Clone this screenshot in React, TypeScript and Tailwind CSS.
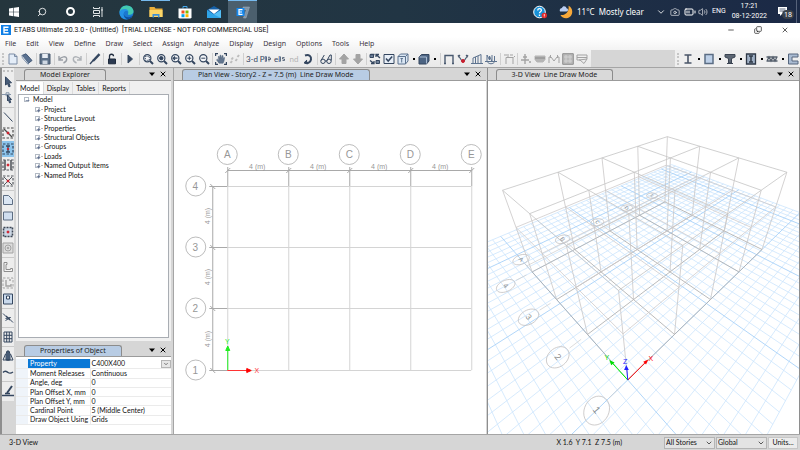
import type { ReactNode } from 'react';
import clsx from 'clsx';
import {
	BatteryMedium,
	Camera,
	ChevronDown,
	Copy,
	Minus,
	Plus,
	Search,
	Volume2,
	X,
} from 'lucide-react';

const NAVY = '#34465f';
const GRAY = '#a3a3a3';

type IconProps = { children: ReactNode; color?: string; size?: string };

function Icon({ children, color = NAVY, size = 'size-3' }: IconProps) {
	return (
		<svg
			viewBox="0 0 12 12"
			className={clsx('shrink-0', size)}
			fill="none"
			stroke={color}
			strokeWidth="1"
			aria-hidden="true"
		>
			{children}
		</svg>
	);
}

function Magnifier({ children }: { children?: ReactNode }) {
	return (
		<Icon>
			<circle cx="5.3" cy="5.2" r="3.6" fill="#f4f6f9" strokeWidth="1.2" />
			<path d="M8 8l3 3" strokeWidth="2" />
			{children}
		</Icon>
	);
}

type Tool = { name: string; icon: ReactNode };
// '|' and '||' are narrow and wide separators, 'v' is a drop-down arrow
type Entry = Tool | '|' | '||' | 'v';

const mainTools: Entry[] = [
	{
		name: 'New model',
		icon: (
			<Icon>
				<path d="M2 1h5.5L10 3.5V11H2z" fill="#e4edf8" stroke="#7c8da6" />
				<path d="M7.5 1v2.500H10" stroke="#7c8da6" />
			</Icon>
		),
	},
	{
		name: 'Open',
		icon: (
			<Icon>
				<path d="M1 2.500L5 .8l6 6.700-4 3z" fill="#5b7291" stroke="#455a78" />
				<path d="M1 2.500l.4 2.300L7 11.300V10.200" fill="#fff" stroke="#8295ae" />
			</Icon>
		),
	},
	'||',
	{
		name: 'Save',
		icon: (
			<Icon>
				<path d="M1 1h10v10H1z" fill="#5d7189" stroke="#44566d" />
				<path d="M3.200 1h5.600v4H3.200z" fill="#e9eef5" stroke="none" />
				<path d="M3.500 7.500h5V11h-5z" fill="#cfd8e3" stroke="none" />
			</Icon>
		),
	},
	'||',
	{
		name: 'Undo',
		icon: (
			<Icon color="#9a9fa6">
				<path d="M2 3v4h4M2.300 6.600C4 3.500 9.500 2.500 9.700 6c.1 2-1.700 3.300-3.200 4" strokeWidth="1.400" />
			</Icon>
		),
	},
	{
		name: 'Redo',
		icon: (
			<Icon color="#aeb2b7">
				<path d="M10 3v4H6M9.700 6.600C8 3.500 2.500 2.500 2.300 6c-.1 2 1.700 3.300 3.200 4" strokeWidth="1.400" />
			</Icon>
		),
	},
	'||',
	{
		name: 'Edit',
		icon: (
			<Icon>
				<path d="M10.500 1.200L4 8" strokeWidth="2.400" />
				<path d="M4.500 7L1 11" strokeWidth="1.300" />
			</Icon>
		),
	},
	'|',
	{
		name: 'Lock model',
		icon: (
			<Icon color="#1f2b3d">
				<path d="M3.500 6V3.200c0-2.600 4-2.600 4 0" strokeWidth="1.300" />
				<path d="M2.500 6h7v4.800h-7z" fill="#2b3950" />
			</Icon>
		),
	},
	'||',
	{
		name: 'Run analysis',
		icon: (
			<Icon>
				<path d="M4 2l4.500 4L4 10z" fill={NAVY} />
			</Icon>
		),
	},
	'||',
	{
		name: 'Rubber band zoom',
		icon: (
			<Magnifier>
				<path d="M3.300 3.300h4v4h-4z" strokeDasharray="1.200 1" />
			</Magnifier>
		),
	},
	{
		name: 'Restore full view',
		icon: (
			<Magnifier>
				<circle cx="5.300" cy="5.200" r="1.700" fill={NAVY} />
			</Magnifier>
		),
	},
	{
		name: 'Previous zoom',
		icon: (
			<Magnifier>
				<path d="M3 5.200h4.500M5 3.500L3.200 5.200 5 7" strokeWidth="1.200" />
			</Magnifier>
		),
	},
	{
		name: 'Zoom in',
		icon: (
			<Magnifier>
				<path d="M3.300 5.200h4M5.300 3.200v4" />
			</Magnifier>
		),
	},
	{
		name: 'Zoom out',
		icon: (
			<Magnifier>
				<path d="M3.300 5.200h4" />
			</Magnifier>
		),
	},
	'|',
	{
		name: 'Pan',
		icon: (
			<Icon>
				<path d="M.6 3V.6H3M9 .6h2.400V3M.6 9v2.400H3M9 11.400h2.400V9" strokeWidth="1.200" />
				<path
					d="M4 10.200L1.500 6.800l1-.6 1.300 1L3.300 3.500l.9-.2.9 2.500-.1-3.600h1l.4 3.500.8-3.200.9.200-.4 3.600 1.200-2 .7.4L9 8.200l-1 2z"
					fill="#62758e"
					stroke="#4f627b"
					strokeWidth=".5"
				/>
			</Icon>
		),
	},
	{
		name: 'Walk through',
		icon: (
			<Icon color="#bdbdbd">
				<path d="M1.500 10l1.500-2M2.500 6.500l1.500-2M6.500 8l1.500-2M8.500 4l1.500-2" strokeWidth="2" />
			</Icon>
		),
	},
	'|',
	{ name: '3-d view', icon: <span className="text-[8px] text-[#34465f]">3-d</span> },
	{
		name: 'Plan view',
		icon: (
			<span className="flex items-center text-[8px] text-[#34465f]">
				Pl
				<Icon size="w-1.5 h-3">
					<path d="M1 1v10M4 4h5v3H4M6 1v3M6 7v4" strokeWidth="1.500" />
				</Icon>
			</span>
		),
	},
	{
		name: 'Elevation view',
		icon: (
			<span className="flex items-center text-[8px] text-[#34465f]">
				el
				<Icon size="w-1.5 h-3">
					<path d="M1 1v10M9 3H5v3h4v3H5" strokeWidth="1.500" />
				</Icon>
			</span>
		),
	},
	{ name: 'Named display', icon: <span className="text-[8px] text-[#b3b3b3]">nd</span> },
	{
		name: 'Rotate 3D view',
		icon: (
			<Icon>
				<path d="M3 2.500c4-1.500 6.500 1 6 4S5.500 10.800 3 9.500" strokeWidth="2" />
				<path d="M5 7L2 9.800l3.500 1.200" fill={NAVY} />
			</Icon>
		),
	},
	'||',
	{
		name: 'Object shrink',
		icon: (
			<Icon>
				<circle cx="3" cy="8.300" r="2.200" />
				<circle cx="9" cy="8.300" r="2.200" />
				<path d="M1 7.500L4.300 2M7 7.500L10 2h1.300v5.500M5 8h2" />
			</Icon>
		),
	},
	'||',
	{
		name: 'Move up in list',
		icon: (
			<Icon color={GRAY}>
				<path d="M6 1l4.500 5H8v4.500H4V6H1.500z" fill={GRAY} />
			</Icon>
		),
	},
	{
		name: 'Move down in list',
		icon: (
			<Icon color={GRAY}>
				<path d="M6 11L1.500 6H4V1.500h4V6h2.500z" fill={GRAY} />
			</Icon>
		),
	},
	'|',
	{
		name: 'Object view options',
		icon: (
			<Icon>
				<path d="M1 1.500h3.500v3H1zM7 7.500h3.500v3H7z" fill="#71839b" />
				<path d="M1.500 1.500h4M11 5L7 1.500M7 4V1.500h3M1 7.500l4 3M5 8v2.500H2" strokeWidth="1.300" />
			</Icon>
		),
	},
	{
		name: 'Display options',
		icon: (
			<Icon>
				<path d="M1 1.500h10v9H1z" fill="#e8eff8" />
				<path d="M3 5.500l2.200 2.500L9.200 3.500" strokeWidth="1.500" />
			</Icon>
		),
	},
	{
		name: 'Assign to selection',
		icon: (
			<Icon color="#5d738f">
				<path d="M1 3.500h7.500V11H1zM1 3.500L3.500 1H11v7l-2.500 3M8.500 3.500L11 1" fill="#dbe7f4" />
				<path d="M4.700 5v4.500M3.500 5.500h2.400" />
			</Icon>
		),
	},
	'v',
	{
		name: 'Render objects',
		icon: (
			<Icon>
				<path d="M1 4l2.500-2.500H11V8l-2.500 3H1z" fill="#4c6483" />
				<path d="M1.500 4h7v6.500" stroke="#a9bbd2" />
			</Icon>
		),
	},
	'v',
	'||',
	{
		name: 'Undeformed shape',
		icon: (
			<Icon color="#4a5a70">
				<path d="M1 10.500h2M9 10.500h2M2 10.500V2.500h8v8" strokeWidth="1.400" />
			</Icon>
		),
	},
	{
		name: 'Deformed shape',
		icon: (
			<Icon color="#4a5a70">
				<path d="M1 2l4 6M11 2L7 8M1 4l2-2M11 4L9 2" strokeWidth="1.200" />
				<circle cx="6" cy="8" r="1.500" fill="#c8202f" stroke="#c8202f" />
			</Icon>
		),
	},
	{
		name: 'Force diagrams',
		icon: (
			<Icon color="#5d738f">
				<path d="M0 10.500h12M2 10.500V5l8-3.500v9M4.500 10V4M7 10V3" />
			</Icon>
		),
	},
	{
		name: 'Energy diagrams',
		icon: (
			<Icon color="#5d738f">
				<path d="M0 8.500h12M2 8V2l2.500 5V3L7 8.500V2M9.500 8V3M2 8.500c2 3 6 3 8 0" />
			</Icon>
		),
	},
	'||',
	{
		name: 'Steel frame design',
		icon: (
			<Icon color={GRAY}>
				<path d="M3 11V4.500h7V11M1 2h3M5 1v3M7 2h3M10.500 4.500L12 3" />
			</Icon>
		),
	},
	'|',
	{
		name: 'Composite design',
		icon: (
			<Icon color={GRAY}>
				<path d="M1 7h8M5 1v10M3 4h4M9 9h2" strokeWidth="1.400" />
			</Icon>
		),
	},
	{
		name: 'Slab design',
		icon: (
			<Icon color={GRAY}>
				<path d="M1 3h10v3.500L9 9H3L1 6.500z" fill="#b5b5b5" stroke="#b5b5b5" />
				<path d="M1 5h10" stroke="#888" />
			</Icon>
		),
	},
	{
		name: 'Joist design',
		icon: (
			<Icon color={GRAY}>
				<path d="M1 10V4h2l3 4 3-4h2v6M2.500 2v3M9.500 2v3" />
			</Icon>
		),
	},
	{
		name: 'Shear wall design',
		icon: (
			<Icon color="#8f8f8f">
				<path d="M.7.7h10.600v10.600H.7z" fill="#b9b9b9" />
				<path d="M3 3h2v2H3zM7 3h2v2H7zM3 7h2v2H3zM7 7h2v2H7z" stroke="#d2d2d2" />
			</Icon>
		),
	},
	{
		name: 'Connection design',
		icon: (
			<Icon color={GRAY}>
				<path d="M1 2h10v4L8 10.500 4 7H1zM1 4.500h10M3 7l8-1" />
			</Icon>
		),
	},
];

const sectionTools: Entry[] = [
	{
		name: 'I section',
		icon: (
			<Icon color="#4a5568">
				<path d="M2.500 2h7M2.500 10h7M6 2v8" strokeWidth="1.600" />
			</Icon>
		),
	},
	'v',
	{
		name: 'Solid section',
		icon: (
			<Icon color="#5b6d84">
				<path d="M2 1.500h8v9H2z" fill="#bdd0e8" strokeWidth="1.500" />
			</Icon>
		),
	},
	'v',
	{
		name: 'Tee section',
		icon: (
			<Icon color="#3b4452">
				<path d="M1 1.500h10V4L7.500 5.500V10h-3V5.500L1 4z" fill="#5c6673" />
				<path d="M3 10.500h6" />
			</Icon>
		),
	},
	'v',
	{
		name: 'Encased section',
		icon: (
			<Icon color="#2f3947">
				<path d="M1.500 1h9v10h-9z" fill="#9fb0c5" strokeWidth="1.300" />
				<path d="M4 3h4M4 9h4M6 3v6" strokeWidth="1.500" />
			</Icon>
		),
	},
	'v',
	{
		name: 'Deck section',
		icon: (
			<Icon color="#56606d">
				<path d="M.5 4h11M.5 8h11M1 8l2-4 2 4 2-4 2 4 2-4" strokeWidth="1.300" />
			</Icon>
		),
	},
	'v',
	{
		name: 'Channel section',
		icon: (
			<Icon color="#56677f">
				<path d="M1.500 1H11v3H5v4h6v3H1.500z" fill="#a9bbd2" />
			</Icon>
		),
	},
];

const dashedBox = (
	<path d="M1 1h10v10H1z" strokeDasharray="2.500 1.500" strokeWidth="1.200" />
);

type DrawTool = (Tool & { active?: boolean }) | '|';

const drawTools: DrawTool[] = [
	{
		name: 'Select object',
		icon: (
			<Icon>
				<path d="M3.500.8l6 6H6.800l1.400 3.500-1.300.6L5.500 7.500 3.500 9z" fill="#465b78" />
			</Icon>
		),
	},
	{
		name: 'Reshape object',
		icon: (
			<Icon>
				<path d="M0 2.500h9M4 .8h3v3H4z" stroke="#8494a9" />
				<path d="M5.500 3l4 4.500H7.700l1 3-1.200.4-1-3-1 1z" fill="#5b6f8b" />
			</Icon>
		),
	},
	'|',
	{
		name: 'Draw beam',
		icon: (
			<Icon>
				<path d="M2 1.500l8.500 9" />
			</Icon>
		),
	},
	{
		name: 'Quick draw beams',
		icon: (
			<Icon color="#4b4b4b">
				{dashedBox}
				<path d="M2 2l8 8" strokeWidth="1.300" />
				<circle cx="6" cy="6" r="1" fill="#d21f2b" stroke="#d21f2b" />
			</Icon>
		),
	},
	{
		name: 'Quick draw columns',
		active: true,
		icon: (
			<Icon color="#33475f">
				{dashedBox}
				<path d="M4 3h4M4 9h4M6 3v6" strokeWidth="1.300" />
				<circle cx="6" cy="6" r=".8" fill="#d21f2b" stroke="#d21f2b" />
			</Icon>
		),
	},
	{
		name: 'Quick draw secondary beams',
		icon: (
			<Icon color="#55595f">
				{dashedBox}
				<path d="M3 1v10M9 1v10" strokeWidth="1.600" />
				<circle cx="6" cy="6" r="1" fill="#d21f2b" stroke="#d21f2b" />
			</Icon>
		),
	},
	{
		name: 'Quick draw braces',
		icon: (
			<Icon color="#55595f">
				{dashedBox}
				<path d="M2 2l8 8M10 2l-8 8" />
				<circle cx="6" cy="6" r="1" fill="#d21f2b" stroke="#d21f2b" />
			</Icon>
		),
	},
	'|',
	{
		name: 'Draw floor',
		icon: (
			<Icon>
				<path d="M1.500 1.500h5l4 4v5h-9z" fill="#dbe6f3" stroke="#5d6d82" />
			</Icon>
		),
	},
	{
		name: 'Draw rectangular floor',
		icon: (
			<Icon>
				<path d="M1.500 2h9v8h-9z" fill="#d0deef" stroke="#5d6d82" />
			</Icon>
		),
	},
	{
		name: 'Quick draw floor',
		icon: (
			<Icon color="#3d4654">
				<path d="M1.500 1.500h9v9h-9z" fill="#ccd7e5" strokeWidth="1.600" strokeDasharray="2 1" />
				<circle cx="6" cy="6" r="1" fill="#d21f2b" stroke="#d21f2b" />
			</Icon>
		),
	},
	{
		name: 'Quick draw area around point',
		icon: (
			<Icon color={GRAY}>
				<path d="M1 1h10v10H1z" fill="#dcdcdc" />
				<circle cx="6" cy="6" r="3" />
				<circle cx="6" cy="6" r=".8" fill={GRAY} />
			</Icon>
		),
	},
	'|',
	{
		name: 'Draw wall stack',
		icon: (
			<Icon color="#8d8d8d">
				<path d="M5 1.500H2v9h8.500V7.500h-2v1H4v-5h1z" fill="#f4f4f4" />
			</Icon>
		),
	},
	{
		name: 'Quick draw walls',
		icon: (
			<Icon color={GRAY}>
				<path d="M1 1h10v10H1z" strokeDasharray="2.500 1.500" />
				<path d="M4 3v6h5V7M7 3h2" strokeWidth="1.400" />
			</Icon>
		),
	},
	{
		name: 'Draw wall openings',
		icon: (
			<Icon>
				<path d="M1.500 1h9v10h-9z" fill="#c9d9ec" />
				<path d="M4.500 3h3v3h-3z" fill="#fff" />
			</Icon>
		),
	},
	'|',
	{
		name: 'Draw links',
		icon: (
			<Icon>
				<path d="M1 1.500l3 3M8 7.500l3 3M3.500 6.500l5-1-5 3" />
				<path d="M4 4l4 4" strokeWidth="1.500" />
			</Icon>
		),
	},
	'|',
	{
		name: 'Draw grids',
		icon: (
			<Icon>
				<path d="M2 1h8v10H2zM4.700 1v10M7.300 1v10M2 4.300h8M2 7.700h8" />
			</Icon>
		),
	},
	'|',
	{
		name: 'Draw elevation',
		icon: (
			<Icon>
				<path d="M5 1h2l1 3v6H4V4z" fill="#5b708c" />
				<path d="M3.500 4L1 10h10L8.500 4M6 1v10" />
			</Icon>
		),
	},
	{
		name: 'Draw dimension lines',
		icon: (
			<Icon>
				<path d="M1 6.500c2-2.500 3.500-1 5 0s3 1 5-.5" strokeWidth="1.400" />
			</Icon>
		),
	},
	'|',
	{
		name: 'Draw reference points',
		icon: (
			<Icon>
				<path d="M0 10.500h12M3 8.500h5" strokeWidth="1.300" />
				<path d="M10 1L5 8" strokeWidth="2" />
			</Icon>
		),
	},
];

function Toolbar({ tools }: { tools: Entry[] }) {
	return (
		<>
			{tools.map((tool, i) => {
				if (tool === '|' || tool === '||') {
					return (
						<span
							key={i}
							className={clsx(
								'flex shrink-0 justify-center',
								tool === '|' ? 'w-[3px]' : 'w-1',
							)}
						>
							<span className="h-3 w-px bg-[#d0d0d0]" />
						</span>
					);
				}
				if (tool === 'v') {
					return (
						<button
							key={i}
							type="button"
							aria-label="More"
							className="grid w-[7px] shrink-0 place-items-center"
						>
							<span className="size-0.5 bg-black" />
						</button>
					);
				}
				return (
					<button
						key={i}
						type="button"
						aria-label={tool.name}
						className="grid h-4 w-3.5 shrink-0 place-items-center leading-none"
					>
						{tool.icon}
					</button>
				);
			})}
		</>
	);
}

function WindowsTaskbar() {
	const slot = 'grid h-full w-7 place-items-center';
	const app = 'grid h-full w-[29px] place-items-center border-t';

	return (
		<header className="flex h-[23px] shrink-0 items-center bg-linear-to-r from-[#25363d] via-[#213544] to-[#1b2946] font-['Noto_Sans',sans-serif] text-white">
			<button type="button" aria-label="Start" className={slot}>
				<Icon size="size-2.5" color="none">
					<path d="M0 1.700l5.300-.8v4.800H0zM6 .8L12 0v5.700H6zM0 6.300h5.300v4.800L0 10.300zM6 6.300h6V12l-6-.8z" fill="#fff" />
				</Icon>
			</button>
			<button type="button" aria-label="Search" className={slot}>
				<Search className="size-2.5 -scale-x-100" strokeWidth={2} />
			</button>
			<button type="button" aria-label="Cortana" className={slot}>
				<span className="size-[9px] rounded-full border-2 border-white" />
			</button>
			<button type="button" aria-label="Task view" className={slot}>
				<Icon color="#dfe4e6">
					<path d="M1.500 1v1.500h6V1M1.500 4.500h6v3h-6zM1.500 11V9.500h6V11M10 1v10M9 4h2" />
				</Icon>
			</button>
			<button type="button" aria-label="Edge" className={clsx(app, 'border-transparent')}>
				<svg viewBox="0 0 16 16" className="size-[15px]" aria-hidden="true">
					<circle cx="8" cy="8" r="7.500" fill="#1b78cf" />
					<path d="M.6 8C.8 3.500 4 .5 8 .5c4.500 0 7.500 3 7.500 6.200 0 2.300-1.700 3.800-4 3.800-1.500 0-2.300-.5-2-1 .8-1 .6-3.800-2.300-3.800C4 5.700 1 6.500.6 8z" fill="#43c9b0" />
					<path d="M.6 8c.4-3 3-4 6-3.800 2.400.2 3.700 1.800 3.500 3.300C9.500 5.500 5.500 5.500 5 9c-.3 3 2 5.500 4.500 6C5 16.300.4 13 .6 8z" fill="#2593e6" />
					<path d="M5 9c0 3.500 4.500 5.500 9 2.600-1.300 2.500-3 3.400-5 3.600C6.500 14.500 4.700 12 5 9z" fill="#0d4f9e" />
				</svg>
			</button>
			<button type="button" aria-label="File Explorer" className={clsx(app, 'border-[#76b9ed]')}>
				<svg viewBox="0 0 14 12" className="h-3 w-3.5" aria-hidden="true">
					<path d="M.5 1h5l1 1.500h7V11H.5z" fill="#e9ae3a" />
					<path d="M.5 4h13v7H.5z" fill="#fbd668" />
					<path d="M3.500 11.500V8h7v3.500H9V9.700H5v1.800z" fill="#3c90d8" />
				</svg>
			</button>
			<button type="button" aria-label="Microsoft Store" className={clsx(app, 'border-transparent')}>
				<svg viewBox="0 0 14 14" className="size-3.5" aria-hidden="true">
					<path d="M5 3.500V1.500h4v2" fill="none" stroke="#43a6ea" />
					<path d="M.5 3.500h13v9l-1 1h-11l-1-1z" fill="#fff" />
					<path d="M3.500 5.500h3v3h-3z" fill="#f25022" />
					<path d="M7.500 5.500h3v3h-3z" fill="#7fba00" />
					<path d="M3.500 9.200h3v3h-3z" fill="#00a4ef" />
					<path d="M7.500 9.200h3v3h-3z" fill="#ffb900" />
				</svg>
			</button>
			<button type="button" aria-label="Mail" className={clsx(app, 'border-transparent')}>
				<svg viewBox="0 0 14 12" className="h-3 w-3.5" aria-hidden="true">
					<path d="M0 4l7-4 7 4v8H0z" fill="#1560a8" />
					<path d="M1.500 3.500h11L7 8z" fill="#fff" />
					<path d="M0 4l7 4.500L14 4v8H0z" fill="#2fa4e7" />
					<path d="M14 4v8L6 7.900l1 .6z" fill="#55bff5" />
				</svg>
			</button>
			<button type="button" aria-label="ETABS" className={clsx(app, 'border-[#76b9ed] bg-[#4b5f6d]')}>
				<svg viewBox="0 0 14 14" className="size-3.5" aria-hidden="true">
					<path d="M7 2h6.500L10 13H7.500l3-8.500H7z" fill="#7f92a3" stroke="#a8b5c0" strokeWidth=".5" />
					<path d="M.5 3h8v8h-8z" fill="#1687ea" />
					<path d="M6.500 4.700H3v4.600h3.500M3 7h3" fill="none" stroke="#fff" strokeWidth="1.200" />
				</svg>
			</button>

			<div className="ml-auto flex h-full items-center text-[8px] leading-none">
				<svg viewBox="0 0 14 14" className="mr-3 size-3.5" aria-hidden="true">
					<circle cx="6.500" cy="7" r="5.800" fill="#1791d8" stroke="#fff" strokeWidth="1" />
					<path d="M4.700 5.500c0-2.500 3.700-2.300 3.700-.2C8.400 6.800 6.500 6.800 6.500 8.300M6.500 9.500V11" fill="none" stroke="#fff" strokeWidth="1.300" />
					<circle cx="11.300" cy="10.500" r="2.700" fill="#e22b2b" />
					<path d="M11.300 9v2M11.300 11.500v.7" stroke="#fff" strokeWidth=".8" />
				</svg>
				<svg viewBox="0 0 14 14" className="mr-1 size-3.5" aria-hidden="true">
					<path d="M9.500.8C15 3 14.500 12.500 7.500 13.300 4.500 13.500 2.300 12 1.500 10c5 .8 9-3.500 8-9.200z" fill="#f6a83a" />
					<path d="M1 6.500c-1-2.800 1.500-3.500 2-3.500C3.500.5 7.200.8 7.500 3.300c2 .2 2 3 0 3.200z" fill="#b9cdf2" />
				</svg>
				<span className="mr-1">11°C</span>
				<span className="mr-3">Mostly clear</span>
				<button type="button" aria-label="Hidden icons" className="mr-1">
					<ChevronDown className="size-2.5" />
				</button>
				<Camera className="mr-1 size-2.5" strokeWidth={1.5} />
				<BatteryMedium className="mr-0.5 size-3" />
				<Volume2 className="mr-1 size-2.5" strokeWidth={1.5} />
				<span className="font-[Roboto,sans-serif] text-[7px]">ENG</span>
				<time
					className="ml-1.5 flex flex-col items-center gap-[3px] font-[Roboto,sans-serif] text-[7px]"
					dateTime="2022-12-08T17:21"
				>
					<span>17:21</span>
					<span>08-12-2022</span>
				</time>
				<button type="button" aria-label="Notifications" className="relative mr-1 ml-2.5 size-[15px]">
					<svg viewBox="0 0 12 12" className="size-3" aria-hidden="true">
						<path d="M1 1h9v7H5l-2 2V8H1z" fill="#fff" />
						<path d="M2.500 3h6M2.500 5h6" stroke="#5c6980" />
					</svg>
					<span className="absolute -right-0.5 bottom-0 rounded-full bg-[#3a4149] px-0.5 text-[7px] leading-[9px]">
						18
					</span>
				</button>
				<span className="mr-[3px] h-full w-px bg-[#56627a]" />
			</div>
		</header>
	);
}

const menus = [
	'File',
	'Edit',
	'View',
	'Define',
	'Draw',
	'Select',
	'Assign',
	'Analyze',
	'Display',
	'Design',
	'Options',
	'Tools',
	'Help',
];

type PanelHeaderProps = { title: string; active?: boolean };

function PanelHeader({ title, active }: PanelHeaderProps) {
	return (
		<div className="flex h-[13px] shrink-0 items-end border-b border-[#9b9b9b] bg-[#d6d6d6] pr-1">
			<h2
				className={clsx(
					"ml-2 h-[11px] rounded-t-[3px] border border-b-0 border-[#8c8c8c] px-[15px] font-['Noto_Sans',sans-serif] text-[7px] leading-[10px] whitespace-pre text-[#222]",
					active ? 'bg-[#b8cce4]' : 'bg-[#d9d9d9]',
				)}
			>
				{title}
			</h2>
			<span className="ml-auto flex items-center gap-1 self-center">
				<button type="button" aria-label={`${title} menu`}>
					<Icon size="size-1.5" color="none">
						<path d="M0 3h12L6 10z" fill="#000" />
					</Icon>
				</button>
				<button type="button" aria-label={`Close ${title}`}>
					<X className="size-2 text-black" strokeWidth={3} />
				</button>
			</span>
		</div>
	);
}

const treeItems = [
	'Project',
	'Structure Layout',
	'Properties',
	'Structural Objects',
	'Groups',
	'Loads',
	'Named Output Items',
	'Named Plots',
];

function TreeToggle({ open }: { open?: boolean }) {
	const Sign = open ? Minus : Plus;

	return (
		<button
			type="button"
			aria-label={open ? 'Collapse' : 'Expand'}
			className="grid size-[5px] shrink-0 place-items-center border border-[#b3bac4] bg-white"
		>
			<Sign className="size-[5px] text-[#4a5c80]" strokeWidth={3} />
		</button>
	);
}

function ModelExplorer() {
	return (
		<section className="flex min-h-0 flex-1 flex-col bg-[#f0f0f0]">
			<PanelHeader title="Model Explorer" />
			<div role="tablist" className="flex h-[13px] shrink-0 items-end pl-px text-[7px] leading-[11px]">
				{['Model', 'Display', 'Tables', 'Reports'].map((name, i) => (
					<button
						key={name}
						type="button"
						role="tab"
						aria-selected={i === 0}
						className={clsx(
							'h-3 border-r border-[#dcdcdc] px-[3px]',
							i === 0 && 'bg-white',
						)}
					>
						{name}
					</button>
				))}
			</div>
			<div className="mx-0.5 mb-[3px] flex-1 border border-[#a9adb3] bg-white">
				<ul className="grid h-[85px] grid-rows-9 pl-[5px] text-[7px] leading-none">
					<li className="flex items-center gap-1">
						<TreeToggle open />
						Model
					</li>
					{treeItems.map((item) => (
						<li key={item} className="flex items-center gap-px pl-[11px]">
							<TreeToggle />
							<span className="w-0.5 border-t border-[#b9b9b9]" />
							{item}
						</li>
					))}
				</ul>
			</div>
		</section>
	);
}

const properties = [
	['Property', 'C400X400'],
	['Moment Releases', 'Continuous'],
	['Angle, deg', '0'],
	['Plan Offset X, mm', '0'],
	['Plan Offset Y, mm', '0'],
	['Cardinal Point', '5 (Middle Center)'],
	['Draw Object Using', 'Grids'],
];

function ObjectProperties() {
	return (
		<section className="flex h-[90px] shrink-0 flex-col bg-white">
			<PanelHeader title="Properties of Object" active />
			<table className="mt-0.5 h-[66px] w-full table-fixed text-left text-[7px] leading-none">
				<tbody>
					{properties.map(([name, value], i) => (
						<tr key={name} className="border-b border-[#ebebeb]">
							<td className="w-3 bg-[#eff4fa] p-0" />
							<th
								scope="row"
								className={clsx(
									'w-[62px] p-0 pl-0.5 font-normal whitespace-nowrap',
									i === 0 && 'bg-[#0a78d6] text-white',
								)}
							>
								{name}
							</th>
							<td className="border-l border-[#ebebeb] p-0 pl-px whitespace-nowrap">
								<div className="flex items-center justify-between">
									{value}
									{i === 0 && (
										<button
											type="button"
											aria-label="Choose property"
											className="grid h-2 w-2.5 place-items-center border border-[#b5b5b5] bg-[#e6e6e6]"
										>
											<ChevronDown className="size-1.5" />
										</button>
									)}
								</div>
							</td>
						</tr>
					))}
				</tbody>
			</table>
		</section>
	);
}

const columns = [
	{ label: 'A', x: 53 },
	{ label: 'B', x: 114 },
	{ label: 'C', x: 175 },
	{ label: 'D', x: 236 },
	{ label: 'E', x: 297 },
];
const rows = [
	{ label: '4', y: 105 },
	{ label: '3', y: 166 },
	{ label: '2', y: 227 },
	{ label: '1', y: 289 },
];

function PlanView() {
	return (
		<svg
			viewBox="0 0 311 353"
			className="min-h-0 w-full flex-1"
			fill="none"
			fontFamily="Liberation Sans, sans-serif"
			role="img"
			aria-label="Plan view"
		>
			<g stroke="#d4d4d4">
				{columns.map(({ x }) => (
					<path key={x} d={`M${x + 0.5} 105V289`} />
				))}
				{rows.map(({ y }) => (
					<path key={y} d={`M53 ${y + 0.5}H297`} />
				))}
			</g>
			<g stroke="#a9a9a9">
				<path d="M53 89.500H297M38.500 105V289" />
				{columns.map(({ x }) => (
					<path key={x} d={`M${x + 0.5} 86V105M${x - 2} 92l5-5`} />
				))}
				{rows.map(({ y }) => (
					<path key={y} d={`M35 ${y + 0.5}H53M36 ${y - 2}l5 5`} />
				))}
			</g>
			<g stroke="#b4b4b4" strokeWidth="0.9">
				{columns.map(({ x }) => (
					<circle key={x} cx={x} cy="73.500" r="10" />
				))}
				{rows.map(({ y }) => (
					<circle key={y} cx="21.500" cy={y} r="10" />
				))}
			</g>
			<g fill="#979797" fontSize="10" textAnchor="middle">
				{columns.map(({ label, x }) => (
					<text key={label} x={x} y="77">
						{label}
					</text>
				))}
				{rows.map(({ label, y }) => (
					<text key={label} x="21" y={y + 4}>
						{label}
					</text>
				))}
			</g>
			<g fill="#979797" fontSize="7" textAnchor="middle">
				{columns.slice(1).map(({ x }) => (
					<text key={x} x={x - 31} y="88">
						4 (m)
					</text>
				))}
				{rows.slice(1).map(({ y }) => (
					<text key={y} transform={`translate(36 ${y - 31}) rotate(-90)`}>
						4 (m)
					</text>
				))}
			</g>
			<path d="M53.500 289V268" stroke="#1fef1f" />
			<path d="M53.500 265l-2 4.500h4z" fill="#1fef1f" stroke="#1fef1f" />
			<path d="M53 289.500H73" stroke="#f33" />
			<path d="M77 289.500l-4.500-2v4z" fill="#f00" stroke="#f00" />
			<g fontSize="7" textAnchor="middle">
				<text x="53" y="263" fill="#1fef1f">
					Y
				</text>
				<text x="82.500" y="292" fill="#f33">
					X
				</text>
			</g>
		</svg>
	);
}

// Perspective camera: i and j count 4 m bays along X and Y, z is in metres.
function project(i: number, j: number, z = 0): [number, number] {
	const w = i + j + 6.62 - 0.2573 * z;
	return [
		(984 * i + 321 * j + 4154 - 167.2 * z) / w - 488,
		(33.6 * (i + j) + 2515 - 153.7 * z) / w - 81,
	];
}

type Point = [number, number, number?];

function line(...points: Point[]) {
	return `M${points
		.map((p) => project(...p).map((n) => n.toFixed(2)).join(' '))
		.join('L')}`;
}

function range(from: number, to: number) {
	return Array.from({ length: to - from + 1 }, (_, n) => from + n);
}

function ring(ci: number, cj: number) {
	return `${line(
		...range(0, 31).map((n): Point => {
			const a = (n * Math.PI) / 16;
			return [ci + 0.165 * Math.cos(a), cj + 0.165 * Math.sin(a)];
		}),
	)}Z`;
}

const STEP = 0.1875;
const GROUND = { i0: -9, i1: 33, j0: -9, j1: 25 };

function groundLines(major: boolean) {
	const { i0, i1, j0, j1 } = GROUND;
	const wanted = (n: number) => (n % 10 === 0) === major;
	return [
		...range(i0, i1)
			.filter(wanted)
			.map((n) => line([n * STEP, j0 * STEP], [n * STEP, j1 * STEP])),
		...range(j0, j1)
			.filter(wanted)
			.map((n) => line([i0 * STEP, n * STEP], [i1 * STEP, n * STEP])),
	].join('');
}

function storyLines(z: number) {
	return [
		...range(0, 4).map((i) => line([i, 0, z], [i, 3, z])),
		...range(0, 3).map((j) => line([0, j, z], [4, j, z])),
	].join('');
}

const verticals = range(0, 4)
	.flatMap((i) => range(0, 3).map((j) => line([i, j, 0], [i, j, 7.5])))
	.join('');

const bubbles = [
	...range(0, 3).map((j) => ({ label: `${j + 1}`, i: -0.53, j })),
	...['A', 'B', 'C', 'D', 'E'].map((label, i) => ({ label, i, j: 3.53 })),
];

const leaders = [
	...range(0, 3).map((j) => line([-0.33, j], [-0.12, j])),
	...range(0, 4).map((i) => line([i, 3], [i, 3.33])),
	line([0, 3.25], [4, 3.25]),
].join('');

function ModelView() {
	return (
		<svg
			viewBox="0 0 311 353"
			className="min-h-0 w-full flex-1"
			fill="none"
			fontFamily="Liberation Sans, sans-serif"
			role="img"
			aria-label="3-D view"
		>
			<path d={groundLines(false)} stroke="#cbe4fc" strokeWidth="0.8" />
			<path d={groundLines(true)} stroke="#a8d1f8" strokeWidth="0.9" />
			<path d={leaders} stroke="#cdcdcd" strokeWidth="0.7" />
			<path d={storyLines(0)} stroke="#a9a9a9" strokeWidth="0.8" />
			<path d={storyLines(4.5)} stroke="#cfcccc" strokeWidth="0.8" />
			<path d={storyLines(7.5)} stroke="#c4c4c4" strokeWidth="0.8" />
			<path d={verticals} stroke="#c9c6c6" strokeWidth="0.8" />
			{bubbles.map(({ label, i, j }) => {
				const [x, y] = project(i, j);
				const size = Math.round(62 / (i + j + 6.62));
				return (
					<g key={label}>
						<path d={ring(i, j)} stroke="#c2bfbf" strokeWidth="0.8" />
						<text
							transform={`translate(${x} ${y}) rotate(50)`}
							y={size / 3}
							fontSize={size}
							textAnchor="middle"
							fill="#8f8f8f"
						>
							{label}
						</text>
					</g>
				);
			})}
			<path d="M139.500 299L157 281.500" stroke="#f00" />
			<path d="M160 278.500l-5 2.200 2.800 2.800z" fill="#f00" />
			<path d="M139.500 299L124 282" stroke="#0f0" />
			<path d="M121 279l2 5.300 3.300-2.700z" fill="#0d0" />
			<path d="M139.500 299l-1-12" stroke="#22f" />
			<path d="M138 284l-2.200 5h4.800z" fill="#22f" />
			<g fontSize="7" textAnchor="middle">
				<text x="162.500" y="279.500" fill="#f00">
					X
				</text>
				<text x="118.500" y="279" fill="#0d0">
					Y
				</text>
				<text x="137" y="283" fill="#22f">
					Z
				</text>
			</g>
		</svg>
	);
}

type StatusSelectProps = { label: string; value: string };

function StatusSelect({ label, value }: StatusSelectProps) {
	return (
		<label className="relative flex h-3 w-[51px] items-center">
			<select
				aria-label={label}
				defaultValue={value}
				className="h-full w-full appearance-none border border-[#b4b4b4] bg-[#e3e3e3] pl-px text-[7px] leading-none"
			>
				<option>{value}</option>
			</select>
			<ChevronDown className="pointer-events-none absolute right-0.5 size-2" />
		</label>
	);
}

export default function App() {
	return (
		<div className="flex h-screen flex-col overflow-hidden bg-[#d6d6d6] font-[Lato,sans-serif] text-[#111]">
			<WindowsTaskbar />

			<div className="flex h-3.5 shrink-0 items-center bg-white pl-px font-[Roboto,sans-serif] text-[7px] leading-none">
				<svg viewBox="0 0 10 10" className="size-2.5" aria-hidden="true">
					<path d="M0 0h10v10H0z" fill="#0f7fe6" />
					<path d="M7.500 2.200H3v5.600h4.500M3 5h4" fill="none" stroke="#fff" strokeWidth="1.400" />
				</svg>
				<h1 className="ml-[3px] whitespace-pre">
					ETABS Ultimate 20.3.0 - (Untitled)  [TRIAL LICENSE - NOT FOR COMMERCIAL USE]
				</h1>
				<div className="ml-auto flex gap-[19px] pr-[11px]">
					<button type="button" aria-label="Minimize">
						<Minus className="size-2" />
					</button>
					<button type="button" aria-label="Restore">
						<Copy className="size-2 -scale-y-100" />
					</button>
					<button type="button" aria-label="Close">
						<X className="size-2" />
					</button>
				</div>
			</div>

			<nav className="flex h-[13px] shrink-0 items-center gap-2.5 bg-linear-to-b from-white to-[#f3f3f3] pl-[5px] font-['Noto_Sans',sans-serif] text-[7px] leading-none text-[#3a3340]">
				{menus.map((menu) => (
					<button key={menu} type="button">
						{menu}
					</button>
				))}
			</nav>

			<div className="flex h-[17px] shrink-0 items-center overflow-hidden bg-[#d6d6d6]">
				<div className="flex h-full items-center bg-linear-to-b from-[#f3f3f3] to-[#e9e9e9] pr-0.5">
					<span className="mx-0.5 h-3 border-l-2 border-dotted border-[#c6c6c6]" />
					<Toolbar tools={mainTools} />
				</div>
				<div className="ml-auto flex h-full items-center bg-[#efefef]">
					<span className="mx-0.5 h-3 border-l-2 border-dotted border-[#c6c6c6]" />
					<Toolbar tools={sectionTools} />
				</div>
			</div>

			<main className="flex min-h-0 flex-1 border-t border-[#a5a5a5]">
				<aside className="flex w-3.5 shrink-0 flex-col border-l-2 border-[#8e8e8e]">
					<div className="flex flex-col items-center bg-[#ededed] pb-0.5">
						<span className="my-0.5 w-2.5 border-t-2 border-dotted border-[#c2c2c2]" />
						{drawTools.map((tool, i) =>
							tool === '|' ? (
								<span key={i} className="my-px h-px w-full bg-[#c9c9c9]" />
							) : (
								<button
									key={i}
									type="button"
									aria-label={tool.name}
									className={clsx(
										'grid h-4 w-full place-items-center',
										tool.active && 'bg-[#8cc4ec]',
									)}
								>
									{tool.icon}
								</button>
							),
						)}
					</div>
				</aside>

				<div className="ml-0.5 flex w-[155px] shrink-0 flex-col gap-[3px]">
					<ModelExplorer />
					<ObjectProperties />
				</div>

				<section className="ml-0.5 flex min-w-0 flex-1 flex-col border-l border-[#a5a5a5] bg-white">
					<PanelHeader title="Plan View - Story2 - Z = 7.5 (m)  Line Draw Mode" active />
					<PlanView />
				</section>

				<section className="ml-px flex min-w-0 flex-1 flex-col border-x border-[#8e8e8e] bg-white">
					<PanelHeader title="3-D View  Line Draw Mode" />
					<ModelView />
				</section>
			</main>

			<footer className="flex h-4 shrink-0 items-center border-t border-[#a5a5a5] pr-0.5 pl-[9px] text-[7px] leading-none">
				<span>3-D View</span>
				<span className="mr-[42px] ml-auto whitespace-pre">X 1.6  Y 7.1  Z 7.5 (m)</span>
				<div className="flex items-center gap-px">
					<StatusSelect label="Stories" value="All Stories" />
					<StatusSelect label="Coordinate system" value="Global" />
					<button
						type="button"
						className="h-3 w-[30px] border border-[#c6c6c6] bg-[#ececec] text-[7px] leading-none"
					>
						Units...
					</button>
				</div>
			</footer>
		</div>
	);
}
